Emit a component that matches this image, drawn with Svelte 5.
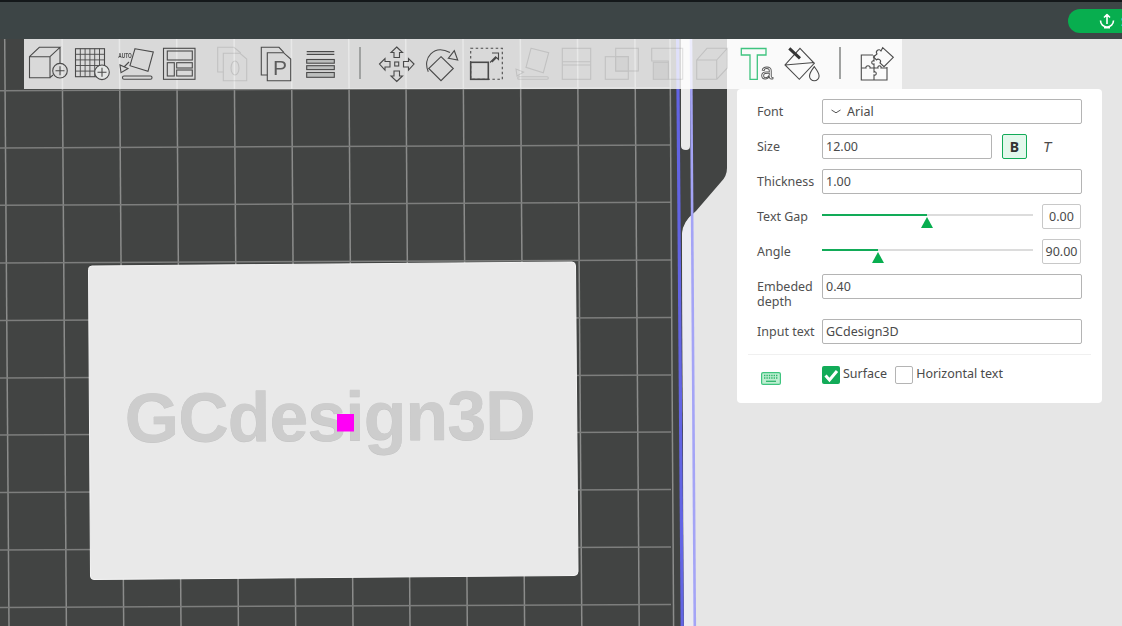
<script>
  const verticals = [5, 62.4, 119.7, 177, 234.4, 291.7, 349, 406, 463.3, 520.6, 577.8, 635.2];
  const horizontals = [90.7, 148, 205.3, 263, 320.5, 378, 435, 492.5, 550, 607.5];
</script>

<div class="page">
  <svg class="scene" viewBox="0 0 1122 626" aria-hidden="true">
    <rect x="0" y="0" width="1122" height="626" fill="#424443" />
    {#each verticals as x}
      <line x1={x - 0.3} y1="39" x2={x + 4} y2="626" class="grid" />
    {/each}
    {#each horizontals as y}
      <line x1="0" y1={y} x2="671" y2={y - 3} class="grid thin" />
    {/each}
    <line x1="670" y1="39" x2="673.6" y2="626" class="grid" />
    <path d="M1122 39 L727 39 L727 168 Q727 176 721 182 L696 211 Q682 222 682 234 L684 626 L1122 626 Z" fill="#e6e6e6" />
    <path d="M682 234 L684 626 H695 L692 215 Q684 222 682 234 Z" fill="#ebebf1" />
    <path d="M681 39 H690 V146 Q690 150 686 150 Q681 150 681 146 Z" fill="#ebebeb" />
    <line x1="677.6" y1="39" x2="682.2" y2="626" stroke="#6264e4" stroke-width="3.2" />
    <line x1="691" y1="39" x2="694.8" y2="626" stroke="#a4a4f6" stroke-width="2.6" />
    <g class="plate">
      <path d="M92 266 L572 262 Q575.500 262 575.500 266 L578 571.500 Q578 575.500 574 575.500 L94 579.500 Q90.500 579.500 90.500 576 L88.500 269.500 Q88.500 266 92 266 Z" fill="#e9e9e9" stroke="#f5f5f5" stroke-width="1" />
      <text x="124.500" y="441" class="plate-shadow" transform="rotate(-0.4 330 415)">GCdesign3D</text>
      <text x="124.800" y="440.500" class="plate-text" transform="rotate(-0.4 330 415)">GCdesign3D</text>
    </g>
    <rect x="337" y="414" width="17" height="17.500" fill="#ff00f6" />
  </svg>

  <header class="topbar">
    <div class="publish">
      <svg viewBox="0 0 16 16" width="16" height="16" aria-hidden="true">
        <path d="M8 11 V1.500 M5 4.500 L8 1.500 L11 4.500 M1.500 7.500 A6.500 6.500 0 0 0 14.500 7.500 M5 14.800 H11" fill="none" stroke="#fff" stroke-width="1.600" stroke-linejoin="round" />
      </svg>
      <span>Submit</span>
    </div>
  </header>

  <nav class="toolbar">
    <svg class="tool" viewBox="25 42 44 44" aria-hidden="true"><g class="st">
      <path d="M29.500 56.700 H50 V77.700 H29.500 Z M29.500 56.700 L39.300 47.300 H60 L50 56.700 M60 47.300 V63 M50 77.700 L53 75" />
      <circle cx="60" cy="70.700" r="7.300" /><path d="M55.500 70.700 H64.500 M60 66.200 V75.200" /></g></svg>

    <svg class="tool" viewBox="69 42 44 44" aria-hidden="true"><g class="st">
      <rect x="75.500" y="48.700" width="29" height="28" />
      <path d="M80.300 48.700 V76.700 M85.100 48.700 V76.700 M89.900 48.700 V76.700 M94.700 48.700 V76.700 M99.500 48.700 V76.700 M75.500 54.300 H104.500 M75.500 59.900 H104.500 M75.500 65.500 H104.500 M75.500 71.100 H104.500" stroke-width="0.900" />
      <circle cx="102" cy="72.300" r="7.300" class="disc" /><path d="M97.500 72.300 H106.500 M102 67.800 V76.800" /></g></svg>

    <svg class="tool" viewBox="114 42 44 44" aria-hidden="true"><g class="st">
      <path d="M136 48.700 L154.300 52 L149 71.300 L131 65.700 Z" />
      <path d="M121 65 L122 72.700 L129 68.500 Z M125 67 L130 62" />
      <rect x="123.500" y="76" width="29.500" height="3.300" rx="1.500" /></g>
      <text x="119.300" y="58" class="auto" textLength="13.500" lengthAdjust="spacingAndGlyphs">AUTO</text></svg>

    <svg class="tool" viewBox="158 42 44 44" aria-hidden="true"><g class="st" stroke-width="1.200">
      <rect x="164.500" y="48.300" width="31.500" height="31" />
      <rect x="168.300" y="51" width="25" height="9" />
      <rect x="168.300" y="62.700" width="7" height="13.300" />
      <rect x="177.700" y="62.700" width="15.600" height="5.300" />
      <rect x="177.700" y="70" width="15.600" height="6" /></g></svg>

    <svg class="tool g9 faded" viewBox="211 42 44 44" aria-hidden="true"><g class="st">
      <path d="M224.300 72 H218.700 V47.300 H235 L241.700 53" />
      <path d="M224.300 53.300 H241 L247.700 59 V80.700 H224.300 Z" />
      <ellipse cx="236" cy="68" rx="4" ry="7" /></g></svg>

    <svg class="tool" viewBox="255 42 44 44" aria-hidden="true"><g class="st">
      <path d="M268.300 75 H262.300 V47.300 H280 L285 52.700" />
      <path d="M268.300 52.700 H284.500 L291.700 59 V80.700 H268.300 Z" /></g>
      <text x="274" y="75" class="plet">P</text></svg>

    <svg class="tool" viewBox="299 42 44 44" aria-hidden="true"><g class="st">
      <path d="M307.700 51.700 H335.300 M307.700 54.300 H335.300" stroke-width="1.200" />
      <rect x="307.700" y="59.500" width="27.600" height="3.700" class="shade" />
      <rect x="307.700" y="65.700" width="27.600" height="3.900" class="shade" />
      <rect x="307.700" y="72.500" width="27.600" height="4.800" class="shade" /></g></svg>

    <span class="sep first"></span>

    <svg class="tool g13" viewBox="374 42 44 44" aria-hidden="true"><g class="st">
      <path d="M396.700 47 L402.500 52.500 H399.500 V57.500 H394 V52.500 H391 Z" />
      <path d="M396.700 81.500 L402.500 76 H399.500 V71 H394 V76 H391 Z" />
      <path d="M379.500 64 L385 58.500 V61.500 H390 V67 H385 V70 Z" />
      <path d="M414 64 L408.500 58.500 V61.500 H403.500 V67 H408.500 V70 Z" />
      <rect x="394.700" y="62" width="4" height="4" /></g></svg>

    <svg class="tool g1" viewBox="419 42 44 44" aria-hidden="true"><g class="st">
      <path d="M441 56.700 L453.300 68.500 L441 80.700 L428.700 68.500 Z" />
      <path d="M428.300 71.700 C422 58 434 44 450 52.500" />
      <path d="M448.300 58.300 L457.700 60 L454.300 50.700 Z" /></g></svg>

    <svg class="tool g1" viewBox="464 42 44 44" aria-hidden="true"><g class="st">
      <rect x="470.700" y="48.300" width="31.600" height="31" stroke-dasharray="2.500 2.500" />
      <rect x="470.700" y="62.300" width="17.600" height="17" stroke-width="1.600" />
      <path d="M490 62.500 L496 56.500 M492 53 H498.500 V59.500 L496.500 57.500 L492 62" /></g></svg>

    <svg class="tool g4 faded" viewBox="512 42 44 44" aria-hidden="true"><g class="st">
      <path d="M531 48.300 L548.700 52.700 L543.300 72.700 L526 67.300 Z" />
      <path d="M516 69 L517 76 L523.500 72 Z" />
      <rect x="517.700" y="76.700" width="30.600" height="2.600" rx="1.300" /></g></svg>

    <svg class="tool g-1 faded" viewBox="555 42 44 44" aria-hidden="true"><g class="st">
      <rect x="562.300" y="48.300" width="28.400" height="31" />
      <path d="M562.300 61.700 H590.700 M562.300 65 H590.700" /></g></svg>

    <svg class="tool faded" viewBox="599 42 44 44" aria-hidden="true"><g class="st">
      <rect x="615.700" y="48.300" width="22.600" height="22.700" />
      <rect x="605.300" y="56.700" width="23" height="22.600" />
      <rect x="615.700" y="56.700" width="12.600" height="14.300" fill="#b5b5b5" /></g></svg>

    <svg class="tool faded" viewBox="643 42 44 44" aria-hidden="true"><g class="st">
      <path d="M651.700 48.300 H682.700 V79.300 H668.300 V61 H651.700 Z" />
      <rect x="653.300" y="62.300" width="15" height="17" fill="#a8a8a8" /></g></svg>

    <svg class="tool g1 faded" viewBox="688 42 44 44" aria-hidden="true"><g class="st">
      <path d="M696.700 60 H716.700 V79.300 H696.700 Z M696.700 60 L707 48.300 H727.300 L716.700 60 M727.300 48.300 V68 L716.700 79.300" /></g></svg>

    <svg class="tool g3" viewBox="735 42 44 44" aria-hidden="true">
      <path d="M741.300 48.500 H766 V55 H757.300 V79.300 H750 V55 H741.300 Z" fill="none" stroke="#3fc47f" stroke-width="1.300" />
      <text x="760.700" y="79" class="ta">a</text></svg>

    <svg class="tool g1" viewBox="780 42 44 44" aria-hidden="true"><g class="st">
      <path d="M800 48.300 L814.300 63.300 L799.300 79.300 L785 65 Z M785 65 L814.300 62.500" />
      <path d="M789.300 48.300 L800 58.300" stroke-width="3" stroke="#333" />
      <path d="M814.300 66.700 C811 71 809.500 73 809.500 76 A4.800 4.800 0 0 0 819.100 76 C819.100 73 817.500 71 814.300 66.700 Z" /></g></svg>

    <span class="sep second"></span>

    <svg class="tool g11" viewBox="851 42 44 44" aria-hidden="true"><g class="st">
      <path d="M872 55 H860.300 V80 H886 V67" />
      <path d="M860.300 68 H865 C864 65 870 65 869 68 H873 V72 C876 71 876 76 873 75 V80" />
      <path d="M873 68 V64 C870 65 870 60 873 61 V55" />
      <path d="M873 68 H877 C876 65 881 65 880 68 H886" />
      <path d="M881.700 47.700 L892.300 57.300 L883 66.700 L879 63 C881 60 877 58 875.500 60 L872.500 57 L876 54 C874 51 878 48 880 51 Z" /></g></svg>
  </nav>

  <section class="panel">
    <div class="row">
      <span class="label">Font</span>
      <div class="field select">
        <svg viewBox="0 0 10 5" width="10" height="5" aria-hidden="true"><path d="M0.500 1 L5 3.800 L9.500 1" fill="none" stroke="#555" stroke-width="1" /></svg>
        <span>Arial</span>
      </div>
    </div>
    <div class="row">
      <span class="label">Size</span>
      <div class="field size">12.00</div>
      <button class="bold" type="button">B</button>
      <span class="italic">T</span>
    </div>
    <div class="row">
      <span class="label">Thickness</span>
      <div class="field">1.00</div>
    </div>
    <div class="row">
      <span class="label">Text Gap</span>
      <div class="slider">
        <div class="fill" style="width: 105px"></div>
        <div class="thumb" style="left: 105px"></div>
      </div>
      <div class="num">0.00</div>
    </div>
    <div class="row">
      <span class="label">Angle</span>
      <div class="slider">
        <div class="fill" style="width: 56px"></div>
        <div class="thumb" style="left: 56px"></div>
      </div>
      <div class="num">90.00</div>
    </div>
    <div class="row tall">
      <span class="label">Embeded depth</span>
      <div class="field">0.40</div>
    </div>
    <div class="row">
      <span class="label">Input text</span>
      <div class="field">GCdesign3D</div>
    </div>
    <div class="rule"></div>
    <div class="checks">
      <svg class="keys" viewBox="0 0 20 13" width="20" height="13" aria-hidden="true">
        <rect x="0.600" y="0.600" width="18.800" height="11.800" rx="1.500" fill="#bdeed1" stroke="#3fc47f" stroke-width="1.200" />
        <path d="M3 3.500 H17 M3 6 H17" stroke="#2fb56c" stroke-width="1.300" stroke-dasharray="1.400 1" />
        <path d="M5 9.300 H15" stroke="#2fb56c" stroke-width="1.300" />
      </svg>
      <span class="box on">
        <svg viewBox="0 0 18 18" width="18" height="18" aria-hidden="true"><path d="M3.500 9.500 L7.500 14 L15 5" fill="none" stroke="#fff" stroke-width="3" /></svg>
      </span>
      <span class="check-text surface">Surface</span>
      <span class="box"></span>
      <span class="check-text">Horizontal text</span>
    </div>
  </section>
</div>

<style>
  :global(body) {
    margin: 0;
    overflow: hidden;
    background: #e6e6e6;
  }
  .page {
    position: relative;
    width: 1122px;
    height: 626px;
    overflow: hidden;
    font-family: "Noto Sans", "Liberation Sans", sans-serif;
    color: #4a4a4a;
  }
  .scene {
    position: absolute;
    inset: 0;
    width: 1122px;
    height: 626px;
    filter: blur(0.4px);
  }
  .grid {
    stroke: #8b8c8b;
    stroke-width: 1.500;
  }
  .grid.thin { stroke: #7d7e7d; }
  .plate-text, .plate-shadow {
    font-family: "Liberation Sans", sans-serif;
    font-weight: 700;
    font-size: 70px;
    letter-spacing: -1px;
  }
  .plate-text { fill: #cdcdcd; }
  .plate-shadow { fill: #c2c2c2; }

  .topbar {
    position: relative;
    border-top: 2px solid #14181a;
    background: #3d4546;
    display: flex;
    justify-content: flex-end;
    padding-top: 7px;
    height: 30px;
  }
  .publish {
    width: 54px;
    height: 24px;
    background: #08ae4f;
    border-radius: 12px 0 0 12px;
    color: #fff;
    font-size: 13px;
    line-height: 24px;
    display: flex;
    align-items: center;
    gap: 6px;
    padding-left: 31px;
    box-sizing: border-box;
    white-space: nowrap;
    overflow: hidden;
  }
  .publish svg { flex: none; }

  .toolbar {
    position: relative;
    margin-left: 24px;
    width: 878px;
    height: 50px;
    box-sizing: border-box;
    padding: 3px 0 0 1px;
    background: rgba(255, 255, 255, 0.8);
    display: flex;
    align-items: flex-start;
  }
  .tool {
    flex: none;
    width: 44px;
    height: 44px;
    filter: blur(0.3px);
  }
  .g1 { margin-left: 1px; }
  .g3 { margin-left: 3px; }
  .g4 { margin-left: 4px; }
  .g-1 { margin-left: -1px; }
  .g9 { margin-left: 9px; }
  .g11 { margin-left: 11px; }
  .g13 { margin-left: 13px; }
  .st {
    fill: none;
    stroke: #4a4a4a;
    stroke-width: 1.100;
  }
  .disc { fill: #e4e6e5; }
  .shade { fill: #bdbfbe; }
  .faded { opacity: 0.16; }
  .auto {
    font-family: "Liberation Sans", sans-serif;
    font-weight: 700;
    font-size: 6.500px;
    fill: #4a4a4a;
  }
  .plet {
    font-family: "Liberation Sans", sans-serif;
    font-size: 21px;
    fill: #5c5c5c;
  }
  .ta {
    font-family: "Liberation Sans", sans-serif;
    font-size: 22px;
    fill: #f8f8f8;
    stroke: #555;
    stroke-width: 0.900;
  }
  .sep {
    flex: none;
    width: 2px;
    height: 32px;
    margin-top: 5px;
    background: #a0a2a1;
  }
  .sep.first { margin-left: 17px; }
  .sep.second { margin-left: 15px; }

  .panel {
    position: absolute;
    left: 737px;
    top: 89px;
    width: 365px;
    height: 314px;
    box-sizing: border-box;
    background: #fff;
    border-radius: 4px;
    padding: 10px 20px 0;
    font-size: 12.500px;
  }
  .row {
    display: flex;
    align-items: center;
    height: 25px;
    margin-bottom: 10px;
  }
  .row.tall {
    margin-bottom: 20px;
    align-items: flex-start;
  }
  .row.tall .label { margin-top: 5px; }
  .label {
    flex: none;
    width: 65px;
    line-height: 15px;
    color: #505050;
  }
  .field {
    flex: 1;
    height: 25px;
    box-sizing: border-box;
    border: 1px solid #b4b4b4;
    border-radius: 2px;
    padding-left: 3px;
    line-height: 23px;
    color: #4a4a4a;
  }
  .field.size {
    flex: none;
    width: 170px;
  }
  .select {
    display: flex;
    align-items: center;
    gap: 6px;
    padding-left: 8px;
  }
  .bold {
    flex: none;
    width: 25px;
    height: 25px;
    margin-left: 10px;
    padding: 0;
    border: 1px solid #12ab58;
    border-radius: 2px;
    background: #e3f8ec;
    color: #333;
    font-family: "Noto Sans", sans-serif;
    font-size: 14px;
    font-weight: 700;
  }
  .italic {
    margin-left: 16px;
    font-family: "Liberation Sans", sans-serif;
    font-style: italic;
    font-size: 14px;
    color: #4a4a4a;
  }
  .slider {
    position: relative;
    flex: none;
    width: 211px;
    height: 2px;
    margin-top: -3px;
    background: #dcdcdc;
  }
  .fill {
    height: 2px;
    background: #12ab58;
  }
  .thumb {
    position: absolute;
    top: 3px;
    margin-left: -6px;
    width: 12px;
    height: 11px;
    background: #08ae4f;
    clip-path: polygon(50% 0, 100% 100%, 0 100%);
  }
  .num {
    flex: none;
    width: 39px;
    height: 25px;
    margin-left: 9px;
    box-sizing: border-box;
    border: 1px solid #c8c8c8;
    border-radius: 2px;
    line-height: 23px;
    text-align: center;
  }
  .rule {
    height: 1px;
    margin: 0 -9px 11px;
    background: #f0f0f0;
  }
  .checks {
    display: flex;
    align-items: flex-start;
  }
  .keys {
    flex: none;
    margin: 6px 41px 0 4px;
  }
  .box {
    flex: none;
    width: 18px;
    height: 18px;
    box-sizing: border-box;
    border: 1px solid #b4b4b4;
    border-radius: 2px;
    background: #fff;
  }
  .box.on {
    border: none;
    background: #12ab58;
  }
  .box svg { display: block; }
  .check-text {
    margin-left: 3px;
    line-height: 15px;
  }
  .surface { margin-right: 8px; }
</style>
